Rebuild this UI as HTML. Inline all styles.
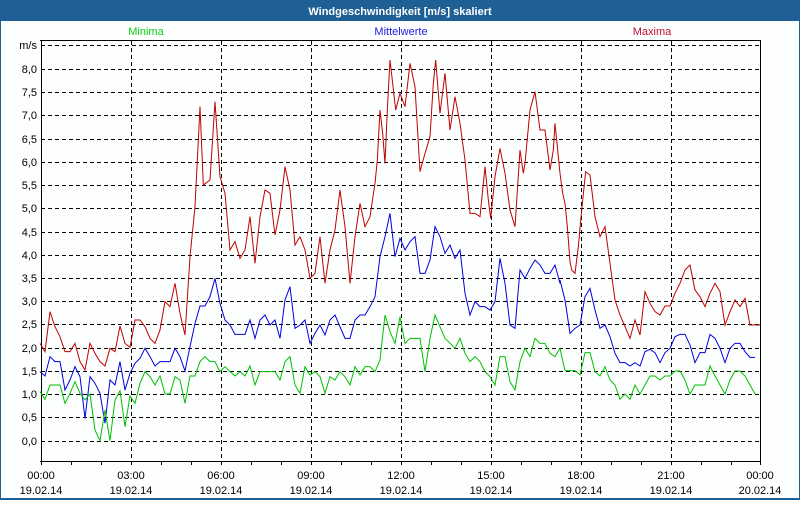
<!DOCTYPE html>
<html><head><meta charset="utf-8"><style>
html,body{margin:0;padding:0;background:#fff;}
body{width:800px;height:500px;overflow:hidden;}
svg text{font-family:"Liberation Sans",Tahoma,sans-serif;font-size:11px;}
</style></head><body>
<svg width="800" height="500" viewBox="0 0 800 500" xmlns="http://www.w3.org/2000/svg">
<rect x="0" y="0" width="800" height="500" fill="#fdfefe"/>
<rect x="0" y="0" width="800" height="21" fill="#1e5f95"/>
<rect x="0.5" y="0.5" width="799" height="498" fill="none" stroke="#1e5f95" stroke-width="1"/>
<rect x="0" y="498" width="800" height="2" fill="#1e5f95"/>
<text x="400" y="15" text-anchor="middle" fill="#fff" font-weight="bold">Windgeschwindigkeit [m/s] skaliert</text>
<text x="146" y="35" text-anchor="middle" fill="#10d010">Minima</text>
<text x="401" y="35" text-anchor="middle" fill="#2020e0">Mittelwerte</text>
<text x="652" y="35" text-anchor="middle" fill="#c01030">Maxima</text>
<g stroke="#000" stroke-width="1" stroke-dasharray="4,3" fill="none">
<path d="M41 45.5H760M41 69.5H760M41 92.5H760M41 115.5H760M41 139.5H760M41 162.5H760M41 185.5H760M41 208.5H760M41 232.5H760M41 255.5H760M41 278.5H760M41 301.5H760M41 324.5H760M41 348.5H760M41 371.5H760M41 394.5H760M41 417.5H760M41 441.5H760"/>
<path d="M131.5 41V461M221.5 41V461M311.5 41V461M401.5 41V461M491.5 41V461M581.5 41V461M671.5 41V461"/>
</g>
<g stroke="#000" stroke-width="1" fill="none">
<path d="M41.5 40V465M40 40.5H761M760.5 40V465M40 461.5H761"/>
<path d="M71.5 461v4M101.5 461v4M131.5 461v4M161.5 461v4M191.5 461v4M221.5 461v4M251.5 461v4M281.5 461v4M311.5 461v4M341.5 461v4M371.5 461v4M401.5 461v4M431.5 461v4M461.5 461v4M491.5 461v4M521.5 461v4M551.5 461v4M581.5 461v4M611.5 461v4M641.5 461v4M671.5 461v4M701.5 461v4M731.5 461v4"/>
</g>
<g fill="#000" text-anchor="end">
<text x="37" y="49">m/s</text>
<text x="37" y="73">8,0</text><text x="37" y="96">7,5</text><text x="37" y="119">7,0</text><text x="37" y="143">6,5</text><text x="37" y="166">6,0</text><text x="37" y="189">5,5</text><text x="37" y="212">5,0</text><text x="37" y="236">4,5</text><text x="37" y="259">4,0</text><text x="37" y="282">3,5</text><text x="37" y="305">3,0</text><text x="37" y="328">2,5</text><text x="37" y="352">2,0</text><text x="37" y="375">1,5</text><text x="37" y="398">1,0</text><text x="37" y="421">0,5</text><text x="37" y="445">0,0</text>
</g>
<g fill="#000" text-anchor="middle">
<text x="41" y="479">00:00</text><text x="41" y="494">19.02.14</text>
<text x="131" y="479">03:00</text><text x="131" y="494">19.02.14</text>
<text x="221" y="479">06:00</text><text x="221" y="494">19.02.14</text>
<text x="311" y="479">09:00</text><text x="311" y="494">19.02.14</text>
<text x="401" y="479">12:00</text><text x="401" y="494">19.02.14</text>
<text x="491" y="479">15:00</text><text x="491" y="494">19.02.14</text>
<text x="581" y="479">18:00</text><text x="581" y="494">19.02.14</text>
<text x="671" y="479">21:00</text><text x="671" y="494">19.02.14</text>
<text x="760" y="479">00:00</text><text x="760" y="494">20.02.14</text>
</g>
<g fill="none" stroke-width="1" stroke-linejoin="miter">
<g transform="translate(40,90) scale(0.33333)">
<polyline vector-effect="non-scaling-stroke" stroke="#c00000" points="0,760 15,785 30,665 45,710 60,740 75,785 90,785 105,760 120,815 135,840 150,760 165,790 180,815 195,828 210,775 225,785 240,708 255,760 270,772 285,690 300,690 315,710 330,745 345,760 360,720 375,635 390,650 405,580 420,670 435,735 450,500 465,350 480,50 490,285 510,270 525,35 540,260 555,310 570,480 585,455 600,505 615,480 630,380 645,520 660,380 675,300 690,310 705,435 720,360 735,230 750,300 765,465 780,440"/>
<polyline vector-effect="non-scaling-stroke" stroke="#0000e0" points="0,845 15,858 30,800 45,815 60,815 75,900 90,870 105,830 120,860 135,985 150,860 165,880 180,910 195,1000 210,870 225,885 240,815 255,900 270,850 285,820 300,805 315,775 330,800 345,828 360,815 375,815 390,815 405,775 420,800 435,843 450,770 465,700 480,648 495,648 510,620 525,565 540,640 555,690 570,705 585,733 600,733 615,733 630,690 645,745 660,690 675,675 690,705 705,690 720,745 735,630 750,590 765,715 780,705"/>
<polyline vector-effect="non-scaling-stroke" stroke="#00c000" points="0,905 15,928 30,885 45,885 60,885 75,940 90,910 105,875 120,910 135,930 150,912 165,1020 180,1052 195,960 210,1052 225,930 240,902 255,1010 270,918 285,940 300,880 315,845 330,860 345,885 360,858 375,912 390,912 405,860 420,870 435,940 450,858 465,858 480,815 495,800 510,815 525,815 540,845 555,830 570,845 585,858 600,845 615,858 630,828 645,885 660,845 675,845 690,845 705,845 720,870 735,815 750,800 765,885 780,910"/>
</g>
<g transform="translate(300,50) scale(0.33333)">
<polyline vector-effect="non-scaling-stroke" stroke="#c00000" points="0,560 15,600 30,685 45,670 60,560 75,700 90,600 105,540 120,420 135,530 150,700 165,560 180,460 195,530 210,500 225,400 232,330 240,180 248,250 255,340 262,180 270,30 278,100 287,180 300,130 315,170 330,40 345,110 360,365 375,310 390,260 400,100 407,30 420,190 435,70 450,240 465,140 480,220 495,330 510,490 525,490 540,500 555,350 565,450 572,505 585,380 600,295 615,370 630,480 645,530 660,300 670,370 675,340 690,180 705,125 720,240 735,240 750,360 760,300 765,220 780,370"/>
<polyline vector-effect="non-scaling-stroke" stroke="#0000e0" points="0,825 15,810 30,880 45,850 60,825 75,855 90,810 105,795 120,830 135,865 150,865 165,810 180,795 195,795 210,770 225,740 240,620 255,560 270,490 285,620 300,565 315,600 330,575 345,560 360,670 375,670 390,630 405,530 420,560 435,610 450,585 465,625 480,600 495,730 510,795 525,755 540,770 555,770 570,780 585,755 600,625 615,700 630,825 645,835 660,660 675,685 690,655 705,630 720,645 735,670 750,670 765,645 780,700"/>
<polyline vector-effect="non-scaling-stroke" stroke="#00c000" points="0,1030 15,950 30,975 45,965 60,980 75,1030 90,980 105,990 120,965 135,980 150,1005 165,950 180,975 195,950 210,950 225,965 240,930 255,795 270,845 285,880 300,800 315,880 330,865 345,865 360,865 375,965 390,865 405,795 420,830 435,865 450,880 465,895 480,865 495,910 510,935 525,920 540,935 555,965 570,980 585,1005 600,920 615,920 630,995 645,1020 660,935 675,895 690,920 705,865 720,880 735,880 750,910 765,920 780,895"/>
</g>
<g transform="translate(540,70) scale(0.33333)">
<polyline vector-effect="non-scaling-stroke" stroke="#c00000" points="60,310 68,370 75,400 82,470 90,575 95,600 105,610 115,530 125,420 137,305 150,315 165,440 180,500 195,470 210,580 225,690 240,735 255,770 270,805 285,750 300,795 315,665 330,700 345,725 360,735 375,708 390,708 405,670 420,640 435,600 450,585 465,660 480,680 495,710 510,670 525,640 540,665 555,765 570,725 585,690 600,710 615,685 630,765 660,765"/>
<polyline vector-effect="non-scaling-stroke" stroke="#0000e0" points="60,630 75,690 90,790 105,775 120,765 135,680 150,655 165,720 180,775 195,765 210,800 225,850 240,878 255,878 270,888 285,878 300,888 315,845 330,838 345,848 360,878 375,848 390,835 405,800 420,793 435,793 450,825 465,878 480,848 495,848 510,793 525,805 540,835 555,878 570,835 585,820 600,820 615,845 630,862 645,862"/>
<polyline vector-effect="non-scaling-stroke" stroke="#00c000" points="60,835 75,902 90,902 105,902 120,915 135,848 150,848 165,905 180,918 195,890 210,930 225,945 240,988 255,972 270,988 285,945 300,972 315,945 330,918 345,918 360,930 375,918 390,918 405,903 420,903 435,930 450,972 465,945 480,945 495,945 510,888 525,918 540,945 555,972 570,930 585,903 600,903 615,918 630,945 645,972"/>
</g>
</g>
</svg>
</body></html>
